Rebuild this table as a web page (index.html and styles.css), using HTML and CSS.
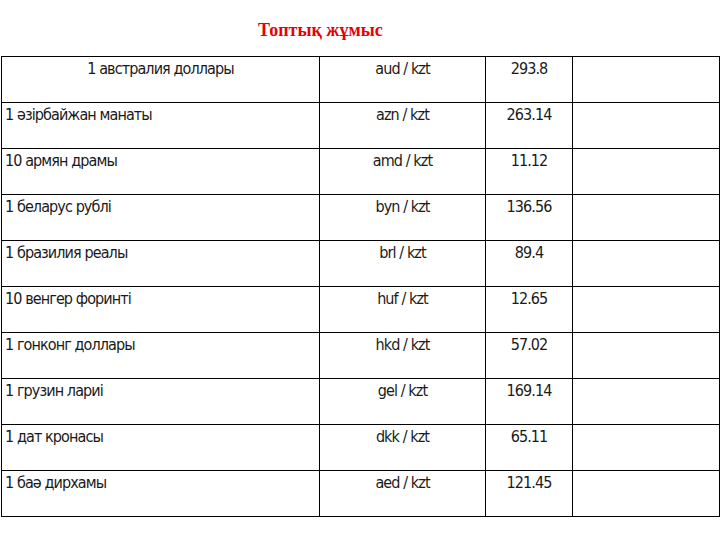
FILE: index.html
```html
<!DOCTYPE html>
<html lang="kk">
<head>
<meta charset="utf-8">
<title>Топтық жұмыс</title>
<link rel="stylesheet" href="styles.css">
</head>
<body>
<div class="page">
  <h1 class="title">Топтық жұмыс</h1>
  <table class="rates">
    <colgroup>
      <col class="c1"><col class="c2"><col class="c3"><col class="c4">
    </colgroup>
    <tbody>
      <tr><td class="center">1 австралия доллары</td><td class="center">aud / kzt</td><td class="center">293.8</td><td></td></tr>
      <tr><td>1 әзірбайжан манаты</td><td class="center">azn / kzt</td><td class="center">263.14</td><td></td></tr>
      <tr><td>10 армян драмы</td><td class="center">amd / kzt</td><td class="center">11.12</td><td></td></tr>
      <tr><td>1 беларус рублі</td><td class="center">byn / kzt</td><td class="center">136.56</td><td></td></tr>
      <tr><td>1 бразилия реалы</td><td class="center">brl / kzt</td><td class="center">89.4</td><td></td></tr>
      <tr><td>10 венгер форинті</td><td class="center">huf / kzt</td><td class="center">12.65</td><td></td></tr>
      <tr><td>1 гонконг доллары</td><td class="center">hkd / kzt</td><td class="center">57.02</td><td></td></tr>
      <tr><td>1 грузин лариі</td><td class="center">gel / kzt</td><td class="center">169.14</td><td></td></tr>
      <tr><td>1 дат кронасы</td><td class="center">dkk / kzt</td><td class="center">65.11</td><td></td></tr>
      <tr><td>1 баә дирхамы</td><td class="center">aed / kzt</td><td class="center">121.45</td><td></td></tr>
    </tbody>
  </table>
</div>
</body>
</html>
```
FILE: styles.css
```css
html, body {
  margin: 0;
  padding: 0;
  background: #ffffff;
}
.page {
  width: 720px;
  height: 540px;
  overflow: hidden;
}
.title {
  margin: 0;
  height: 56px;
  box-sizing: border-box;
  padding: 20px 0 0 258px;
  font-family: "Liberation Serif", "Times New Roman", serif;
  font-weight: bold;
  font-size: 18px;
  line-height: 20px;
  color: #e8000b;
}
.rates {
  border-collapse: collapse;
  table-layout: fixed;
  width: 718px;
  margin-left: 1px;
  font-family: "DejaVu Sans Condensed", "DejaVu Sans", sans-serif;
  font-size: 16px;
  letter-spacing: -0.9px;
  color: #1a1a1a;
}
.c1 { width: 318px; }
.c2 { width: 166px; }
.c3 { width: 87px; }
.c4 { width: 147px; }
.rates td {
  border: 1.5px solid #000000;
  height: 46px;
  box-sizing: border-box;
  padding: 3px 3px 0 3px;
  vertical-align: top;
  line-height: 18px;
  white-space: nowrap;
}
.rates td.center {
  text-align: center;
}
```
